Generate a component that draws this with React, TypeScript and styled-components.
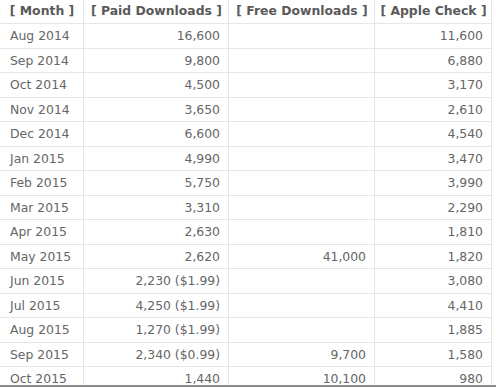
import styled, { createGlobalStyle } from "styled-components";

const GlobalStyle = createGlobalStyle`
  html, body {
    margin: 0;
    padding: 0;
    background: #ffffff;
  }
`;

const rows: [string, string, string, string][] = [
  ["Aug 2014", "16,600", "", "11,600"],
  ["Sep 2014", "9,800", "", "6,880"],
  ["Oct 2014", "4,500", "", "3,170"],
  ["Nov 2014", "3,650", "", "2,610"],
  ["Dec 2014", "6,600", "", "4,540"],
  ["Jan 2015", "4,990", "", "3,470"],
  ["Feb 2015", "5,750", "", "3,990"],
  ["Mar 2015", "3,310", "", "2,290"],
  ["Apr 2015", "2,630", "", "1,810"],
  ["May 2015", "2,620", "41,000", "1,820"],
  ["Jun 2015", "2,230 ($1.99)", "", "3,080"],
  ["Jul 2015", "4,250 ($1.99)", "", "4,410"],
  ["Aug 2015", "1,270 ($1.99)", "", "1,885"],
  ["Sep 2015", "2,340 ($0.99)", "9,700", "1,580"],
  ["Oct 2015", "1,440", "10,100", "980"],
];

const headers = ["[ Month ]", "[ Paid Downloads ]", "[ Free Downloads ]", "[ Apple Check ]"];

const App = () => {
  return (
    <>
      <GlobalStyle />
      <Frame>
        <Grid>
          {headers.map((h) => (
            <HeadCell key={h}>{h}</HeadCell>
          ))}
          {rows.map((r) =>
            r.map((v, i) => (
              <Cell key={r[0] + i} $right={i > 0}>
                {v}
              </Cell>
            ))
          )}
        </Grid>
      </Frame>
    </>
  );
};

const Frame = styled.div`
  width: 496px;
  height: 385px;
  overflow: hidden;
  border-bottom: 2px solid #8c8c8c;
  background: #ffffff;
`;

const Grid = styled.div`
  display: grid;
  grid-template-columns: 84px 145px 146px 117px;
  grid-template-rows: 24px;
  grid-auto-rows: 24.5px;
  font-family: "DejaVu Sans", Verdana, sans-serif;
  font-size: 12.4px;
`;

const HeadCell = styled.div`
  display: flex;
  align-items: center;
  justify-content: center;
  box-sizing: border-box;
  padding: 0 0 2px 1px;
  border-right: 1px solid #e6e6e6;
  border-bottom: 1px solid #e6e6e6;
  font-weight: bold;
  color: #5a5a5a;
  white-space: nowrap;
`;

const Cell = styled.div<{ $right?: boolean }>`
  display: flex;
  align-items: center;
  justify-content: ${(p) => (p.$right ? "flex-end" : "flex-start")};
  box-sizing: border-box;
  padding: ${(p) => (p.$right ? "0 8px 0 0" : "0 0 0 10px")};
  border-right: 1px solid #e6e6e6;
  border-bottom: 1px solid #e6e6e6;
  color: #666666;
  white-space: nowrap;
`;

export default App;
